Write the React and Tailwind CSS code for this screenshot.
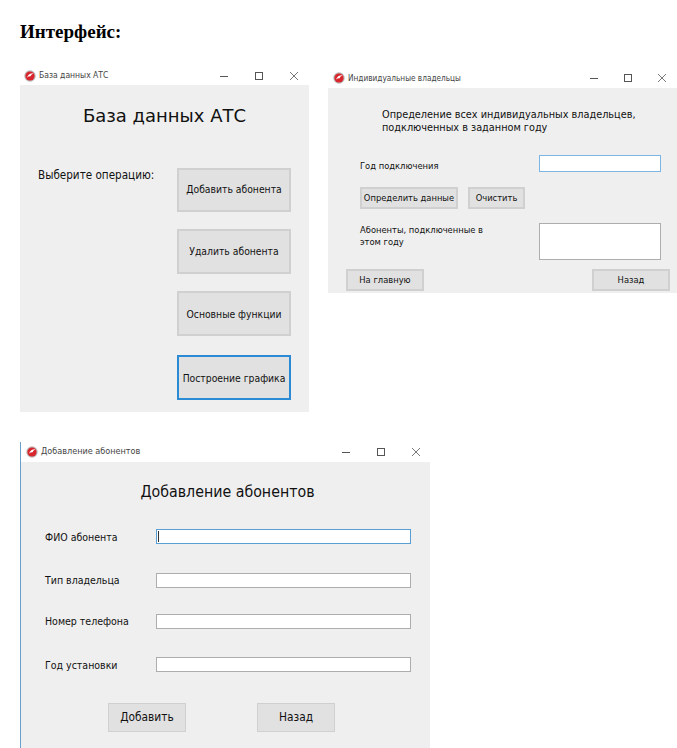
const btn = 'flex items-center justify-center border-2 border-[#d0d0d0] bg-[#e1e1e1] text-[#111]'
const field = 'bg-white border border-[#adadad]'

function AppIcon() {
    return <svg width="12" height="12" viewBox="0 0 12 12" className="shrink-0">
        <circle cx="6" cy="6" r="5.7" fill="#b9b9b9" />
        <circle cx="6" cy="6" r="4.6" fill="#d8262c" />
        <path d="M3 7.5C4 4.5 6.5 3 9.5 3.2C8 4 7 5 6.6 6.2C5.5 6 4.2 6.5 3 7.5Z" fill="#fff" />
    </svg>
}

function TitleBar({ title, height, padding, controls, textSize }) {
    return <div className={`flex items-center justify-between bg-white ${height} ${padding}`}>
        <div className={`flex items-center gap-[3px] text-[#444] ${textSize}`}>
            <AppIcon />
            <span>{title}</span>
        </div>
        <div className={`flex items-center ${controls}`}>
            <svg width="10" height="10" viewBox="0 0 10 10"><path d="M1 5.5H9" stroke="#555" /></svg>
            <svg width="10" height="10" viewBox="0 0 10 10"><rect x="1.5" y="1.5" width="7" height="7" fill="none" stroke="#555" /></svg>
            <svg width="10" height="10" viewBox="0 0 10 10"><path d="M1 1L9 9M9 1L1 9" stroke="#555" strokeWidth="0.8" /></svg>
        </div>
    </div>
}

function MainWindow() {
    return <div className="absolute left-[20px] top-[66px] w-[289px]">
        <TitleBar title="База данных АТС" height="h-[19px]" padding="pl-[4px] pr-[10px]" controls="gap-[25px]" textSize="text-[8.5px]" />
        <div className="h-[327px] bg-[#efefef] text-[#111]">
            <h2 className="pt-[19px] text-center text-[18px] leading-[24px] font-normal font-stretch-normal">База данных АТС</h2>
            <div className="mt-[40px] flex items-start">
                <p className="ml-[18px] mt-[-1px] w-[139px] text-[11.6px] leading-[16px]">Выберите операцию:</p>
                <div className="flex flex-col text-[10.3px]">
                    <button className={`${btn} w-[114px] h-[44px]`}>Добавить абонента</button>
                    <button className={`${btn} w-[114px] h-[45px] pt-[1px] mt-[17px]`}>Удалить абонента</button>
                    <button className={`${btn} w-[114px] h-[45px] pt-[3px] mt-[17px]`}>Основные функции</button>
                    <button className={`${btn} w-[114px] h-[45px] pt-[3px] mt-[19px] !border-[#2a8ad4] whitespace-nowrap`}>Построение графика</button>
                </div>
            </div>
        </div>
    </div>
}

function OwnersWindow() {
    return <div className="absolute left-[328px] top-[68px] w-[349px]">
        <TitleBar title="Индивидуальные владельцы" height="h-[20px]" padding="pl-[5px] pr-[10px]" controls="gap-[24px]" textSize="text-[8.2px]" />
        <div className="h-[205px] bg-[#efefef] text-[#111]">
            <h3 className="pl-[54px] pt-[20px] text-[10.8px] leading-[13px]">Определение всех индивидуальных владельцев,<br />подключенных в заданном году</h3>
            <div className="mt-[21px] flex items-start justify-between pl-[32px] pr-[16px]">
                <span className="pt-[5px] text-[9.3px] leading-[12px]">Год подключения</span>
                <input className="w-[122px] h-[17px] bg-white border border-[#7db5e3] outline-none" />
            </div>
            <div className="mt-[15px] flex gap-[10px] pl-[32px] text-[9.3px]">
                <button className={`${btn} w-[98px] h-[22px]`}>Определить данные</button>
                <button className={`${btn} w-[57px] h-[22px]`}>Очистить</button>
            </div>
            <div className="mt-[14px] flex items-start justify-between pl-[32px] pr-[16px]">
                <p className="w-[130px] pt-[1px] text-[9.3px] leading-[12px]">Абоненты, подключенные в этом году</p>
                <div className={`${field} w-[122px] h-[37px]`}></div>
            </div>
            <div className="mt-[9px] flex justify-between pl-[18px] pr-[7px] text-[9.3px]">
                <button className={`${btn} w-[78px] h-[22px]`}>На главную</button>
                <button className={`${btn} w-[78px] h-[22px]`}>Назад</button>
            </div>
        </div>
    </div>
}

function FormRow({ label, className, labelClass = '', active }) {
    return <div className={`flex items-start h-[15px] ${className}`}>
        <label className={`w-[111px] shrink-0 text-[10.5px] leading-[15px] ${labelClass}`}>{label}</label>
        <div className={`w-[255px] h-[15px] flex items-center bg-white border ${active ? 'border-[#5a9fd4]' : 'border-[#adadad]'}`}>
            {active && <span className="ml-[1px] w-px h-[11px] bg-[#333]"></span>}
        </div>
    </div>
}

function AddWindow() {
    return <div className="absolute left-[20px] top-[442px] w-[410px] h-[306px] border-l border-[#6a9fc9]">
        <TitleBar title="Добавление абонентов" height="h-[20px]" padding="pl-[5px] pr-[9px]" controls="gap-[25px]" textSize="text-[9px]" />
        <div className="h-[286px] bg-[#efefef] pl-[24px] text-[#111]">
            <h2 className="pt-[19px] pl-[4px] -ml-[24px] text-center text-[15.8px] leading-[22px]">Добавление абонентов</h2>
            <FormRow label="ФИО абонента" className="mt-[26px]" labelClass="pt-[1px]" active />
            <FormRow label="Тип владельца" className="mt-[29px]" />
            <FormRow label="Номер телефона" className="mt-[26px]" />
            <FormRow label="Год установки" className="mt-[28px]" labelClass="pt-[1px]" />
            <div className="mt-[31px] ml-[63px] flex gap-[71px] text-[11.8px]">
                <button className={`${btn} !border w-[78px] h-[29px]`}>Добавить</button>
                <button className={`${btn} !border w-[78px] h-[29px]`}>Назад</button>
            </div>
        </div>
    </div>
}

export default function App() {
    return <div className="relative w-[677px] h-[748px] overflow-hidden bg-white font-['DejaVu_Sans',sans-serif] font-stretch-condensed">
        <h1 className="absolute left-[20px] top-[21px] text-[19px] leading-[21px] font-bold text-black font-stretch-normal font-['Liberation_Serif',serif]">Интерфейс:</h1>
        <MainWindow />
        <OwnersWindow />
        <AddWindow />
    </div>
}
